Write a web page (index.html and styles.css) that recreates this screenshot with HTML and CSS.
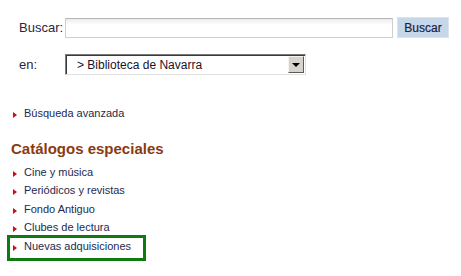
FILE: index.html
```html
<!DOCTYPE html>
<html>
<head>
    <meta charset="UTF-8">
    <link rel="stylesheet" href="styles.css">
</head>
<body>
    <form class="search-form">
        <div class="search-row">
            <label class="search-label">Buscar:</label>
            <input class="search-query" type="text">
            <button class="search-btn" type="button">Buscar</button>
        </div>
        <div class="search-row">
            <label class="search-label">en:</label>
            <div class="fake-select">
                <span class="fake-select-text">&gt; Biblioteca de Navarra</span>
                <span class="fake-select-drop"></span>
            </div>
        </div>
    </form>

    <ul class="link-list advanced">
        <li>Búsqueda avanzada</li>
    </ul>

    <h2 class="section-title">Catálogos especiales</h2>
    <ul class="link-list special">
        <li>Cine y música</li>
        <li>Periódicos y revistas</li>
        <li>Fondo Antiguo</li>
        <li>Clubes de lectura</li>
        <li class="highlighted">Nuevas adquisiciones</li>
    </ul>
</body>
</html>
```

FILE: styles.css
```css
html, body {
    min-height: 276px;
}
body {
    margin: 0;
    background: #fff;
    font-family: "Liberation Sans", Arial, sans-serif;
}
.search-form {
    margin: 0;
    padding: 17px 0 0 19px;
}
.search-row {
    display: flex;
    align-items: center;
    height: 21px;
}
.search-row + .search-row {
    margin-top: 16px;
}
.search-label {
    width: 46px;
    font-size: 13px;
    color: #2d2440;
}
.search-query {
    width: 328px;
    height: 20px;
    box-sizing: border-box;
    margin: 0;
    padding: 0;
    border: 1px solid #cfcfcf;
    border-top-color: #b5b5b5;
    background: linear-gradient(#ececec, #fff 6px);
}
.search-btn {
    width: 52px;
    height: 21px;
    margin-left: 4px;
    padding: 0;
    border: 1px solid #dce5ef;
    background: #c7d7ea;
    font-family: "Liberation Sans", Arial, sans-serif;
    font-size: 12px;
    color: #16243f;
    -webkit-text-stroke: 0.2px #16243f;
}
.fake-select {
    display: flex;
    align-items: center;
    justify-content: space-between;
    width: 241px;
    height: 21px;
    box-sizing: border-box;
    border: 1px solid;
    border-color: #7b7b7b #e2e2e2 #e2e2e2 #7b7b7b;
    box-shadow: inset 1px 1px 0 #3a3a3a;
    background: #fff;
}
.fake-select-text {
    padding-left: 11px;
    font-size: 12px;
    color: #1a1428;
}
.fake-select-drop {
    position: relative;
    width: 16px;
    height: 17px;
    margin-right: 1px;
    box-sizing: border-box;
    border: 1px solid;
    border-color: #f4f4f4 #5a5a5a #5a5a5a #f4f4f4;
    background: #d6d3cc;
}
.fake-select-drop::after {
    content: "";
    position: absolute;
    left: 3px;
    top: 6px;
    border-top: 4px solid #000;
    border-left: 4px solid transparent;
    border-right: 4px solid transparent;
}
.link-list {
    list-style: none;
    margin: 0;
    padding: 0 0 0 13px;
}
.link-list li {
    position: relative;
    font-size: 11px;
    line-height: 18.5px;
    color: #1e2a4e;
}
.link-list li::before {
    content: "";
    display: inline-block;
    margin-right: 7px;
    vertical-align: -1px;
    border-left: 4px solid #c8101c;
    border-top: 3px solid transparent;
    border-bottom: 3px solid transparent;
}
.advanced {
    margin-top: 29px;
}
.section-title {
    margin: 17px 0 5px 11px;
    font-size: 15px;
    line-height: 18px;
    color: #8a3a10;
}
.special {
    padding-bottom: 20px;
}
.link-list li.highlighted::after {
    content: "";
    position: absolute;
    left: -6px;
    top: -2px;
    width: 139px;
    height: 26px;
    box-sizing: border-box;
    border: 3px solid #0f7a12;
}
```
